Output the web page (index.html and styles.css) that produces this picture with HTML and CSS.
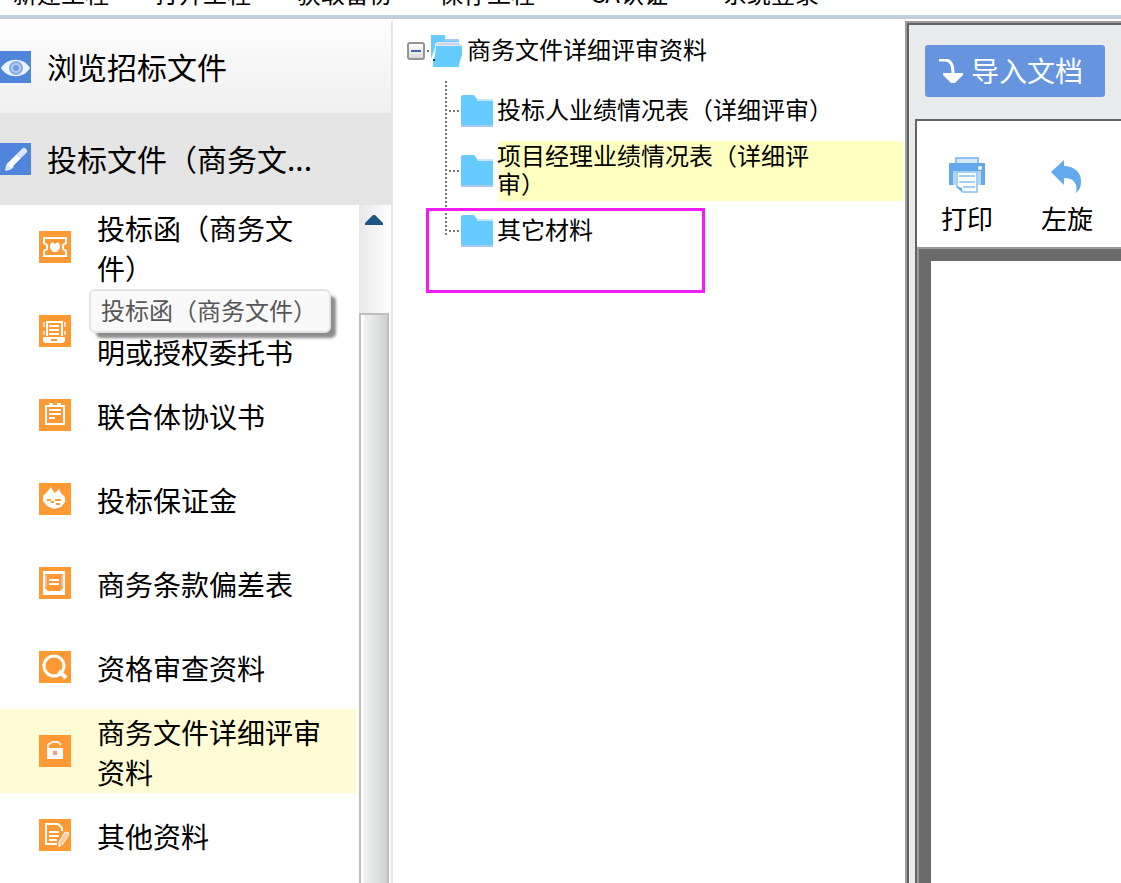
FILE: index.html
```html
<!DOCTYPE html>
<html lang="zh-CN">
<head>
  <meta charset="UTF-8" />
  <title>投标文件制作</title>
  <link rel="stylesheet" href="styles.css">
</head>
<body>
  <nav class="menu">
    <a href="#">新建工程</a>
    <a href="#">打开工程</a>
    <a href="#">获取备份</a>
    <a href="#">保存工程</a>
    <a href="#">CA认证</a>
    <a href="#">系统登录</a>
  </nav>

  <div class="workspace">
    <aside class="sidebar">
      <a href="#" class="section">
        <svg class="section-icon" viewBox="0 0 31 32">
          <rect width="31" height="32" fill="#4f86dc"/>
          <path d="M1 17C7 6 24 6 30 17C24 28 7 28 1 17Z" fill="#eef4fd"/>
          <circle cx="16" cy="17" r="7" fill="#86ace8"/>
          <circle cx="16" cy="17" r="4" fill="#6f9be2" stroke="#b5cdf2" stroke-width="2"/>
        </svg>
        <span>浏览招标文件</span>
      </a>
      <a href="#" class="section open">
        <svg class="section-icon" viewBox="0 0 31 32">
          <rect width="31" height="32" fill="#4f86dc"/>
          <path d="M5 28L6 22L10 19L14 24L10 27Z" fill="#dbe7f9"/>
          <path d="M9 23L19 13" stroke="#fff" stroke-width="6"/>
          <path d="M20 12L24 8" stroke="#dbe7f9" stroke-width="6" stroke-linecap="round"/>
        </svg>
        <span>投标文件（商务文...</span>
      </a>

      <div class="files">
        <ul class="file-list">
          <li><a href="#">
            <svg class="file-icon" viewBox="0 0 32 32">
              <rect width="32" height="32" fill="#ff9933"/>
              <path d="M5 7H27V12L24 14V18L27 20V25H5V20L8 18V14L5 12Z" fill="none" stroke="#fff" stroke-width="2"/>
              <path d="M11 14L13 11L16 13L19 11L21 14V17L18 21H14L11 17Z" fill="#fff"/>
            </svg>
            <span>投标函（商务文件）</span>
          </a></li>
          <li><a href="#">
            <svg class="file-icon" viewBox="0 0 32 32">
              <rect width="32" height="32" fill="#ff9933"/>
              <path d="M8 21V7H23V21" fill="none" stroke="#fff" stroke-width="2"/>
              <path d="M5 7V12M5 16V20M26 7V12M26 16V20" stroke="#ffd9c0" stroke-width="2"/>
              <path d="M10 11H20M10 15H20M10 19H20" stroke="#fff" stroke-width="2"/>
              <path d="M4 22H26V26L24 28H6L4 26Z" fill="#fff"/>
              <path d="M12 25H18" stroke="#ff9933" stroke-width="2"/>
            </svg>
            <span>法定代表人身份证明或授权委托书</span>
          </a></li>
          <li><a href="#">
            <svg class="file-icon" viewBox="0 0 32 32">
              <rect width="32" height="32" fill="#ff9933"/>
              <rect x="7" y="7" width="18" height="18" fill="none" stroke="#fff" stroke-width="2"/>
              <path d="M10 5H14M18 5H22M10 11H22M10 15H22M10 19H16" stroke="#fff" stroke-width="2"/>
            </svg>
            <span>联合体协议书</span>
          </a></li>
          <li><a href="#">
            <svg class="file-icon" viewBox="0 0 32 32">
              <rect width="32" height="32" fill="#ff9933"/>
              <path d="M8 9L12 4L14 8L16 10L20 6L22 10L26 14V19L22 24L15 26L8 23L4 18V13Z" fill="#fff"/>
              <path d="M8 17H12M12 19H15M16 17H22M17 21H21" stroke="#ff9933" stroke-width="2"/>
            </svg>
            <span>投标保证金</span>
          </a></li>
          <li><a href="#">
            <svg class="file-icon" viewBox="0 0 32 32">
              <rect width="32" height="32" fill="#ff9933"/>
              <rect x="4" y="4" width="22" height="24" fill="#fff"/>
              <path d="M6 7H24V21L21 24H9L6 21Z" fill="#ff9933"/>
              <path d="M7 8V20M23 8V20" stroke="#ffb3a0" stroke-width="2"/>
              <path d="M10 13H20M10 17H20" stroke="#fff" stroke-width="2"/>
            </svg>
            <span>商务条款偏差表</span>
          </a></li>
          <li><a href="#">
            <svg class="file-icon" viewBox="0 0 32 32">
              <rect width="32" height="32" fill="#ff9933"/>
              <circle cx="15" cy="15" r="10" fill="none" stroke="#fff" stroke-width="3"/>
              <path d="M20 20L27 27" stroke="#fff" stroke-width="4"/>
            </svg>
            <span>资格审查资料</span>
          </a></li>
          <li class="current"><a href="#">
            <svg class="file-icon" viewBox="0 0 32 32">
              <rect width="32" height="32" fill="#ff9933"/>
              <path d="M9 14V10L13 7H19L22 10" fill="none" stroke="#ffe8dc" stroke-width="2"/>
              <rect x="8" y="13" width="16" height="11" fill="#fff"/>
              <rect x="14" y="16" width="4" height="4" fill="#ff9980"/>
            </svg>
            <span>商务文件详细评审资料</span>
          </a></li>
          <li><a href="#">
            <svg class="file-icon" viewBox="0 0 32 32">
              <rect width="32" height="32" fill="#ff9933"/>
              <path d="M18 25H7V5H19L23 9V12" fill="none" stroke="#fff" stroke-width="2"/>
              <path d="M10 13H20M10 17H20M10 21H18" stroke="#fff" stroke-width="2"/>
              <path d="M22 26L20 28V23L26 13L30 14L28 19L23 26" fill="#ffcda0" stroke="#fff" stroke-width="1"/>
            </svg>
            <span>其他资料</span>
          </a></li>
        </ul>
        <div class="scrollbar">
          <button type="button" class="scroll-up" aria-label="向上滚动">
            <svg viewBox="0 0 18 10"><path d="M0 10V8L8 0H10L18 8V10Z" fill="#1f5582"/></svg>
          </button>
          <div class="scroll-thumb"></div>
        </div>
        <div class="tooltip" role="tooltip">投标函（商务文件）</div>
      </div>
    </aside>

    <main class="tree">
      <div class="tree-root">
        <button type="button" class="toggle" aria-label="折叠"></button>
        <span class="stub"></span>
        <svg class="folder" viewBox="0 0 32 32">
          <path d="M0 0H14V4H28V10H5L0 24Z" fill="#66ccff"/>
          <path d="M14 5H28" stroke="#a9c9f3" stroke-width="2"/>
          <path d="M6 7H28V9H31V12H4V9Z" fill="#e3e8f4"/>
          <path d="M6 9H29" stroke="#b7bfd0" stroke-width="1"/>
          <path d="M5 11H31V20L28 29V32H2V27L4 20Z" fill="#66ccff"/>
          <path d="M3 24V26" stroke="#1d3440" stroke-width="2"/>
        </svg>
        <a href="#">商务文件详细评审资料</a>
      </div>
      <ul class="tree-list">
        <li>
          <svg class="folder" viewBox="0 0 32 32">
            <path d="M0 1L2 0H13L16 4H32V32H0Z" fill="#66ccff"/>
            <path d="M16 5H32" stroke="#c5e6fb" stroke-width="2"/>
            <path d="M0 31H32" stroke="#a9c9f3" stroke-width="2"/>
          </svg>
          <a href="#">投标人业绩情况表（详细评审）</a>
        </li>
        <li class="current">
          <svg class="folder" viewBox="0 0 32 32">
            <path d="M0 1L2 0H13L16 4H32V32H0Z" fill="#66ccff"/>
            <path d="M16 5H32" stroke="#c5e6fb" stroke-width="2"/>
            <path d="M0 31H32" stroke="#a9c9f3" stroke-width="2"/>
          </svg>
          <a href="#">项目经理业绩情况表（详细评审）</a>
        </li>
        <li>
          <svg class="folder" viewBox="0 0 32 32">
            <path d="M0 1L2 0H13L16 4H32V32H0Z" fill="#66ccff"/>
            <path d="M16 5H32" stroke="#c5e6fb" stroke-width="2"/>
            <path d="M0 31H32" stroke="#a9c9f3" stroke-width="2"/>
          </svg>
          <a href="#">其它材料</a>
        </li>
      </ul>
      <div class="marker"></div>
    </main>

    <section class="viewer">
      <div class="viewer-actions">
        <button type="button" class="import">
          <svg viewBox="0 0 24 24">
            <path d="M0 1H7C12 2 14 5 14 16" fill="none" stroke="#fff" stroke-width="3"/>
            <path d="M4 14H24V16L16 24H12L4 16Z" fill="#fff"/>
          </svg>
          <span>导入文档</span>
        </button>
      </div>
      <div class="preview">
        <div class="toolbar">
          <button type="button">
            <svg viewBox="0 0 36 36">
              <path d="M7 8V1H29V8" fill="#d4e8fb" stroke="#8fc2f2" stroke-width="2"/>
              <path d="M0 6H36V28H0Z" fill="#64a9ed"/>
              <rect x="4" y="14" width="4" height="14" fill="#b5d8f8"/>
              <rect x="28" y="14" width="4" height="14" fill="#b5d8f8"/>
              <circle cx="31" cy="11" r="2" fill="#fff"/>
              <path d="M8 15H28V35H14L8 30Z" fill="#fff" stroke="#a2cdf5" stroke-width="2"/>
              <path d="M10 19H26M10 25H26M14 30H26" stroke="#a2cdf5" stroke-width="2"/>
              <path d="M7 29L13 35V31Z" fill="#64a9ed"/>
            </svg>
            <span>打印</span>
          </button>
          <button type="button">
            <svg viewBox="0 0 36 36">
              <path d="M2 15L15 3V9C26 9 32 16 32 24C32 29 31 33 27 36C29 27 25 21 15 21V28Z" fill="#64a9ed"/>
            </svg>
            <span>左旋</span>
          </button>
        </div>
        <div class="page"></div>
      </div>
    </section>
  </div>
</body>
</html>
```
FILE: styles.css
```css
* {
  box-sizing: border-box;
}
body {
  margin: 0;
  height: 100vh;
  display: flex;
  flex-direction: column;
  overflow: hidden;
  background: #fff;
  color: #000;
  font-family: "Noto Sans CJK SC", "Liberation Sans", sans-serif;
}
a {
  color: inherit;
  text-decoration: none;
}
ul {
  list-style: none;
  margin: 0;
  padding: 0;
}
button {
  font-family: inherit;
  color: inherit;
  border: none;
  padding: 0;
  background: none;
  cursor: pointer;
}
svg {
  display: block;
  flex: none;
}

/* top menu */
.menu {
  flex: none;
  height: 19px;
  display: flex;
  align-items: flex-end;
  gap: 46px;
  padding: 0 13px 10px;
  border-bottom: 4px solid #c3cedc;
  overflow: hidden;
  font-size: 24px;
  line-height: 24px;
}
.menu a {
  min-width: 96px;
  text-align: center;
  white-space: nowrap;
}
.workspace {
  flex: 1;
  min-height: 0;
  display: flex;
  margin-top: 2px;
}

/* left column */
.sidebar {
  flex: none;
  width: 393px;
  display: flex;
  flex-direction: column;
  border-right: 2px solid #e5e5e5;
}
.section {
  flex: none;
  height: 92px;
  display: flex;
  align-items: center;
  gap: 16px;
  font-size: 30px;
  white-space: nowrap;
  background: linear-gradient(#fdfdfd, #efefef);
}
.section span {
  padding-bottom: 2px;
}
.section.open {
  background: #e5e5e5;
}
.section-icon {
  width: 31px;
  height: 32px;
}
.files {
  position: relative;
  flex: 1;
  min-height: 0;
  display: flex;
  overflow: hidden;
}
.file-list {
  flex: 1;
  margin-right: 2px;
}
.file-list a {
  height: 84px;
  display: flex;
  align-items: center;
  gap: 26px;
  padding: 0 32px 0 39px;
  font-size: 28px;
  line-height: 40px;
}
.file-list span {
  padding-top: 2px;
}
.file-list .current {
  background: #fefbd5;
}
.file-icon {
  width: 32px;
  height: 32px;
}
.scrollbar {
  flex: none;
  width: 30px;
  margin-right: 2px;
  display: flex;
  flex-direction: column;
  background: linear-gradient(90deg, #e8e8e8, #fdfdfd);
}
.scroll-up {
  height: 108px;
  display: flex;
  justify-content: center;
  padding-top: 10px;
}
.scroll-up svg {
  width: 18px;
  height: 10px;
}
.scroll-thumb {
  flex: 1;
  border: 2px solid #bebebe;
  border-bottom: none;
  background: linear-gradient(90deg, #fff 2px, #f2f2f2 3px, #cfd1d1);
}
.tooltip {
  position: absolute;
  left: 89px;
  top: 84px;
  padding: 0 12px 2px 10px;
  border: 2px solid #e3e3e3;
  border-radius: 6px;
  background: #f9f9f9;
  box-shadow: 6px 6px 3px -1px rgba(0, 0, 0, 0.45);
  color: #575757;
  font-size: 24px;
  line-height: 38px;
  white-space: nowrap;
}

/* file tree */
.tree {
  position: relative;
  flex: none;
  width: 512px;
  padding: 0 2px 0 14px;
  font-size: 24px;
  line-height: 28px;
}
.folder {
  width: 32px;
  height: 32px;
}
.tree-root {
  height: 60px;
  display: flex;
  align-items: center;
}
.tree-root a {
  padding: 0 0 4px 4px;
}
.toggle {
  width: 18px;
  height: 18px;
  border: 2px solid #959595;
  border-radius: 3px;
  background: linear-gradient(#4a69b0, #4a69b0) center / 10px 2px no-repeat, linear-gradient(#fff, #dcdcdc);
}
.stub {
  width: 2px;
  height: 2px;
  margin: 0 2px;
  background: #777;
}
.tree-list {
  margin-left: 38px;
}
.tree-list li {
  min-height: 60px;
  display: flex;
  align-items: center;
  background: repeating-linear-gradient(#777 0 2px, #fff 2px 4px) left top / 2px 100% no-repeat;
}
.tree-list li:last-child {
  background-size: 2px 34px;
}
.tree-list li::before {
  content: "";
  width: 12px;
  height: 2px;
  margin-left: 4px;
  background: repeating-linear-gradient(90deg, #777 0 2px, #fff 2px 4px);
}
.tree-list a {
  flex: 1;
  min-height: 60px;
  display: flex;
  align-items: center;
  padding: 0 0 4px 4px;
}
.tree-list .current a {
  padding-right: 80px;
  background: linear-gradient(#ffffc0, #ffffc0) right / calc(100% - 6px) 100% no-repeat;
}
.marker {
  position: absolute;
  left: 33px;
  top: 187px;
  width: 279px;
  height: 85px;
  border: 3px solid #f41cf4;
}

/* document viewer */
.viewer {
  flex: 1;
  min-width: 0;
  display: flex;
  flex-direction: column;
  padding: 2px 0 0 8px;
  border-left: 2px solid #9c9c9c;
  border-top: 2px solid #9c9c9c;
  box-shadow: inset 2px 2px 0 #636363;
  background: #e9eaec;
  overflow: hidden;
}
.viewer-actions {
  flex: none;
  height: 94px;
  padding: 20px 10px;
}
.import {
  height: 52px;
  display: flex;
  align-items: center;
  gap: 8px;
  padding: 0 22px 0 14px;
  border-radius: 3px;
  background: #6694df;
  color: #fff;
  font-size: 28px;
  line-height: 40px;
  white-space: nowrap;
}
.import span {
  padding-bottom: 2px;
}
.import svg {
  width: 24px;
  height: 24px;
}
.preview {
  flex: 1;
  display: flex;
  flex-direction: column;
  border-left: 2px solid #636363;
  border-top: 2px solid #636363;
  background: #fff;
}
.toolbar {
  flex: none;
  height: 126px;
  display: flex;
}
.toolbar button {
  flex: none;
  width: 100px;
  display: flex;
  flex-direction: column;
  align-items: center;
  gap: 8px;
  padding-top: 36px;
  font-size: 26px;
  line-height: 34px;
}
.toolbar svg {
  width: 36px;
  height: 36px;
}
.page {
  flex: 1;
  border-left: 2px solid #9c9c9c;
  border-top: 2px solid #9c9c9c;
  box-shadow: inset 12px 12px 0 #6b6b6b;
}
```
